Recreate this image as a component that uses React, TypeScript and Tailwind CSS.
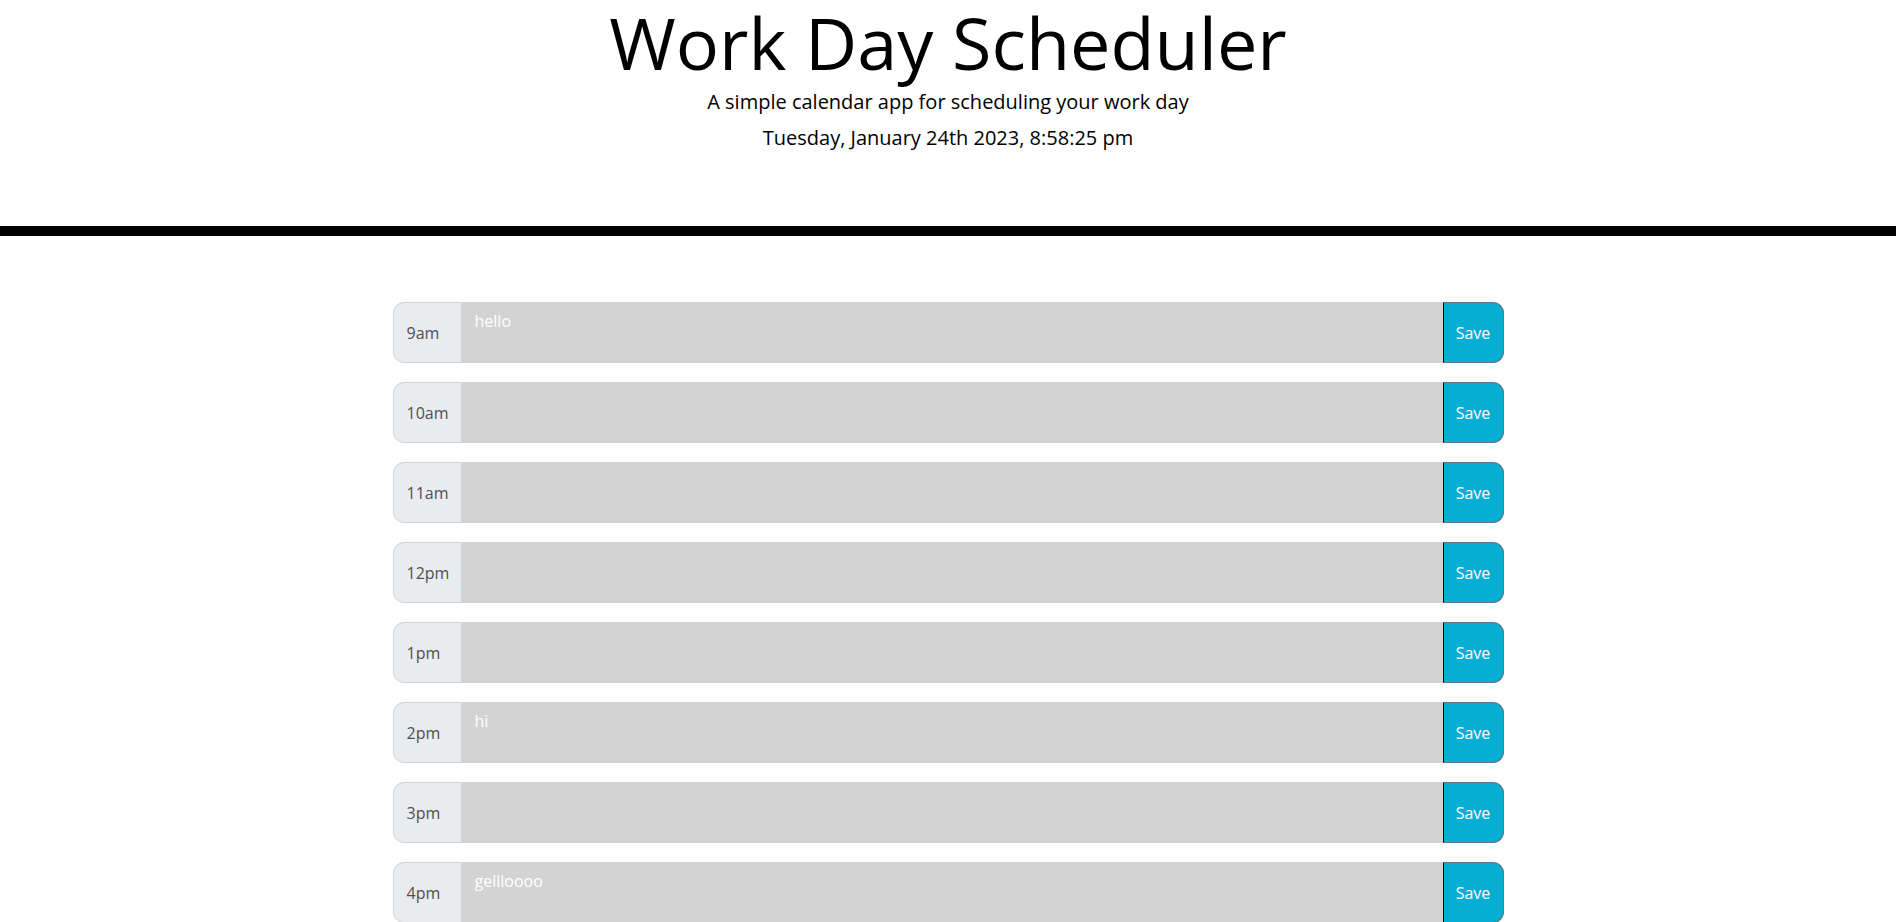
const hours = [
  { label: '9am', text: 'hello' },
  { label: '10am', text: '' },
  { label: '11am', text: '' },
  { label: '12pm', text: '' },
  { label: '1pm', text: '' },
  { label: '2pm', text: 'hi' },
  { label: '3pm', text: '' },
  { label: '4pm', text: 'gellloooo' },
  { label: '5pm', text: '' },
]

function TimeBlock({ label, text }: { label: string; text: string }) {
  return (
    <div className="flex h-[61px] mb-[19px]">
      <div className="w-[69px] shrink-0 flex items-center pl-[13px] bg-[#e9ecef] border border-[#ced4da] rounded-l-[11px] text-[16px] text-[#495057]">
        {label}
      </div>
      <textarea
        defaultValue={text}
        className="flex-1 resize-none bg-[#d3d3d3] text-white text-[16px] leading-[24px] px-[13px] pt-[7px] outline-none"
      />
      <button className="w-[61px] shrink-0 bg-[#06aed5] text-white text-[16px] border border-[#6b7378] border-l-black rounded-r-[11px]">
        Save
      </button>
    </div>
  )
}

export default function App() {
  return (
    <div className="min-h-screen bg-white text-black font-['Open_Sans',sans-serif]">
      {/* Header */}
      <header className="text-center pb-[70px] border-b-[10px] border-black">
        <h1 className="text-[72px] font-normal leading-[84px]">Work Day Scheduler</h1>
        <p className="text-[20px] leading-[36px]">A simple calendar app for scheduling your work day</p>
        <p className="text-[20px] leading-[36px]">Tuesday, January 24th 2023, 8:58:25 pm</p>
      </header>

      {/* Time blocks */}
      <div className="w-[1111px] mx-auto pt-[66px]">
        {hours.map((h) => (
          <TimeBlock key={h.label} label={h.label} text={h.text} />
        ))}
      </div>
    </div>
  )
}
